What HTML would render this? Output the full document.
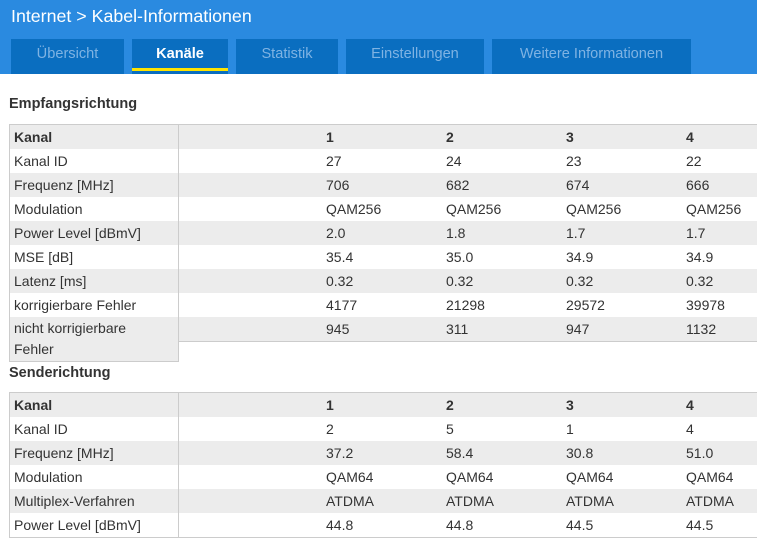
<!DOCTYPE html><html><head><style>
body{margin:0;width:757px;height:556px;overflow:hidden;background:#fff;font-family:"Liberation Sans",sans-serif;position:relative;color:#333}
.hd{position:absolute;left:0;top:0;width:757px;height:74px;background:#2a8ae0}
.t{position:absolute;top:6px;left:11px;color:#fff;font-size:17.8px}
.tab{position:absolute;top:39px;height:35px;background:#0a6ec0;color:#7fb3e3;font-size:14.6px;text-align:center;line-height:31px}
.act{color:#fff;font-weight:bold}
.act:after{content:"";position:absolute;left:0;right:0;bottom:3px;height:3px;background:#ffe400}
h3{position:absolute;left:9px;margin:0;font-size:14.5px;font-weight:bold;color:#333}
.r{position:absolute;left:9px;width:748px;height:24px;font-size:14px;line-height:24px}
.g{background:#ececec}
.r span{position:absolute;top:0}
.lb{position:absolute;left:9px;width:168px;border-left:1px solid #ccc;border-right:1px solid #ccc}
.hr{position:absolute;left:9px;width:748px;height:1px;background:#ccc}
b{font-weight:bold}
</style></head><body>
<div class="hd"><div class="t">Internet <span style="font-weight:300">&gt;</span> Kabel-Informationen</div>
<div class="tab" style="left:11px;width:113px">Übersicht</div>
<div class="tab act" style="left:132px;width:96px">Kanäle</div>
<div class="tab" style="left:236px;width:102px">Statistik</div>
<div class="tab" style="left:346px;width:138px">Einstellungen</div>
<div class="tab" style="left:492px;width:199px">Weitere Informationen</div>
</div>
<h3 style="top:96px">Empfangsrichtung</h3>
<div class="hr" style="top:124px"></div>
<div class="r g" style="top:125px"><span style="left:5px"><b>Kanal</b></span><span style="left:317px"><b>1</b></span><span style="left:437px"><b>2</b></span><span style="left:557px"><b>3</b></span><span style="left:677px"><b>4</b></span></div>
<div class="r" style="top:149px"><span style="left:5px">Kanal ID</span><span style="left:317px">27</span><span style="left:437px">24</span><span style="left:557px">23</span><span style="left:677px">22</span></div>
<div class="r g" style="top:173px"><span style="left:5px">Frequenz [MHz]</span><span style="left:317px">706</span><span style="left:437px">682</span><span style="left:557px">674</span><span style="left:677px">666</span></div>
<div class="r" style="top:197px"><span style="left:5px">Modulation</span><span style="left:317px">QAM256</span><span style="left:437px">QAM256</span><span style="left:557px">QAM256</span><span style="left:677px">QAM256</span></div>
<div class="r g" style="top:221px"><span style="left:5px">Power Level [dBmV]</span><span style="left:317px">2.0</span><span style="left:437px">1.8</span><span style="left:557px">1.7</span><span style="left:677px">1.7</span></div>
<div class="r" style="top:245px"><span style="left:5px">MSE [dB]</span><span style="left:317px">35.4</span><span style="left:437px">35.0</span><span style="left:557px">34.9</span><span style="left:677px">34.9</span></div>
<div class="r g" style="top:269px"><span style="left:5px">Latenz [ms]</span><span style="left:317px">0.32</span><span style="left:437px">0.32</span><span style="left:557px">0.32</span><span style="left:677px">0.32</span></div>
<div class="r" style="top:293px"><span style="left:5px">korrigierbare Fehler</span><span style="left:317px">4177</span><span style="left:437px">21298</span><span style="left:557px">29572</span><span style="left:677px">39978</span></div>
<div class="r g" style="top:317px"><span style="left:317px">945</span><span style="left:437px">311</span><span style="left:557px">947</span><span style="left:677px">1132</span></div>
<div class="hr" style="top:341px"></div>
<div class="g" style="position:absolute;left:9px;top:317px;width:169px;height:45px"></div>
<div class="lb" style="top:124px;height:237px;border-bottom:1px solid #ccc"></div>
<div style="position:absolute;left:14px;top:318px;font-size:14px;line-height:21px">nicht korrigierbare<br>Fehler</div>
<h3 style="top:365px">Senderichtung</h3>
<div class="hr" style="top:392px"></div>
<div class="r g" style="top:393px"><span style="left:5px"><b>Kanal</b></span><span style="left:317px"><b>1</b></span><span style="left:437px"><b>2</b></span><span style="left:557px"><b>3</b></span><span style="left:677px"><b>4</b></span></div>
<div class="r" style="top:417px"><span style="left:5px">Kanal ID</span><span style="left:317px">2</span><span style="left:437px">5</span><span style="left:557px">1</span><span style="left:677px">4</span></div>
<div class="r g" style="top:441px"><span style="left:5px">Frequenz [MHz]</span><span style="left:317px">37.2</span><span style="left:437px">58.4</span><span style="left:557px">30.8</span><span style="left:677px">51.0</span></div>
<div class="r" style="top:465px"><span style="left:5px">Modulation</span><span style="left:317px">QAM64</span><span style="left:437px">QAM64</span><span style="left:557px">QAM64</span><span style="left:677px">QAM64</span></div>
<div class="r g" style="top:489px"><span style="left:5px">Multiplex-Verfahren</span><span style="left:317px">ATDMA</span><span style="left:437px">ATDMA</span><span style="left:557px">ATDMA</span><span style="left:677px">ATDMA</span></div>
<div class="r" style="top:513px"><span style="left:5px">Power Level [dBmV]</span><span style="left:317px">44.8</span><span style="left:437px">44.8</span><span style="left:557px">44.5</span><span style="left:677px">44.5</span></div>
<div class="hr" style="top:537px"></div>
<div class="lb" style="top:392px;height:146px"></div>
</body></html>
